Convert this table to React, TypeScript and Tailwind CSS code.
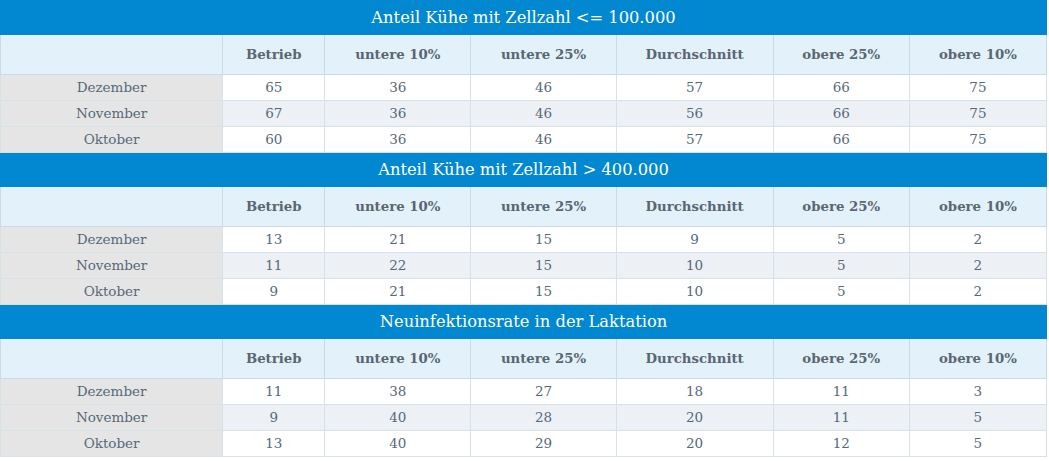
const months = ["Dezember", "November", "Oktober"];
const columns = ["Betrieb", "untere 10%", "untere 25%", "Durchschnitt", "obere 25%", "obere 10%"];
const widths = [222, 102, 146, 145, 157, 136, 137];

const sections = [
  {
    title: "Anteil Kühe mit Zellzahl <= 100.000",
    rows: [
      [65, 36, 46, 57, 66, 75],
      [67, 36, 46, 56, 66, 75],
      [60, 36, 46, 57, 66, 75],
    ],
  },
  {
    title: "Anteil Kühe mit Zellzahl > 400.000",
    rows: [
      [13, 21, 15, 9, 5, 2],
      [11, 22, 15, 10, 5, 2],
      [9, 21, 15, 10, 5, 2],
    ],
  },
  {
    title: "Neuinfektionsrate in der Laktation",
    rows: [
      [11, 38, 27, 18, 11, 3],
      [9, 40, 28, 20, 11, 5],
      [13, 40, 29, 20, 12, 5],
    ],
  },
];

export default function App() {
  return (
    <div className="w-[1049px] h-[461px] bg-white" style={{ fontFamily: '"DejaVu Serif", serif' }}>
      <table className="w-[1047px] table-fixed border-collapse text-[#56687a]">
        <colgroup>
          {widths.map((w, i) => (
            <col key={i} style={{ width: w }} />
          ))}
        </colgroup>
        <tbody>
          {sections.map((s) => (
            <Section key={s.title} title={s.title} rows={s.rows} />
          ))}
        </tbody>
      </table>
    </div>
  );
}

function Section({ title, rows }: { title: string; rows: number[][] }) {
  return (
    <>
      <tr>
        <td
          colSpan={7}
          className="h-[34px] bg-[#0288d1] border border-[#0288d1] text-center text-[16.3px] text-white p-0 pt-[1px]"
        >
          {title}
        </td>
      </tr>
      <tr className="bg-[#e3f2fa]">
        <td className="h-[40px] border border-[#c9dce6] p-0" />
        {columns.map((c) => (
          <td
            key={c}
            className="h-[40px] border border-[#c9dce6] text-center text-[13.3px] font-bold text-[#5a6672] p-0"
          >
            {c}
          </td>
        ))}
      </tr>
      {rows.map((r, i) => (
        <tr key={i} className={i === 1 ? "bg-[#edf1f6]" : "bg-white"}>
          <td className="h-[26px] bg-[#e5e5e5] border border-[#d6e1e8] text-center text-[13.5px] p-0">
            {months[i]}
          </td>
          {r.map((v, j) => (
            <td key={j} className="h-[26px] border border-[#d6e1e8] text-center text-[13.5px] p-0">
              {v}
            </td>
          ))}
        </tr>
      ))}
    </>
  );
}
